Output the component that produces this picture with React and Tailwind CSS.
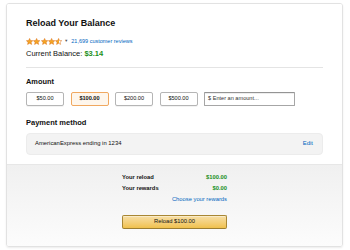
const Star = ({ fill }) => {
  const d = 'M5 0.6 L6.3 3.4 L9.4 3.7 L7.05 5.8 L7.75 8.8 L5 7.25 L2.25 8.8 L2.95 5.8 L0.6 3.7 L3.7 3.4 Z';
  return (
    <svg width="7.2" height="7" viewBox="0 0 10 9.6" className="block">
      <defs>
        <linearGradient id="half" x1="0" x2="1" y1="0" y2="0">
          <stop offset="50%" stopColor="#f5a623" />
          <stop offset="50%" stopColor="#ffffff" />
        </linearGradient>
      </defs>
      <path
        d={d}
        fill={fill === 'full' ? '#f5a623' : 'url(#half)'}
        stroke="#de7921"
        strokeWidth="0.8"
        strokeLinejoin="round"
      />
    </svg>
  );
};

const amounts = ['$50.00', '$100.00', '$200.00', '$500.00'];

export default function App() {
  return (
    <div
      className="w-[350px] h-[250px] bg-white pt-[3px] pl-[6px] text-[#111]"
      style={{ fontFamily: '"Liberation Sans", Arial, sans-serif' }}
    >
      <div className="w-[337px] h-[244px] border border-[#e2e2e2] rounded-[3px] shadow-[0_1px_2px_rgba(0,0,0,0.08)] flex flex-col overflow-hidden">
        {/* Top section */}
        <div className="px-[19px] pt-[14px] pb-[9px] bg-white">
          <h1 className="text-[9px] leading-[11px] font-bold">Reload Your Balance</h1>

          <div className="mt-[8px] h-[8px] flex items-center">
            <div className="flex gap-[0.1px]">
              <Star fill="full" />
              <Star fill="full" />
              <Star fill="full" />
              <Star fill="full" />
              <Star fill="half" />
            </div>
            <span className="ml-[2px] text-[4px] text-[#555]">▼</span>
            <span className="ml-[3px] text-[5.5px] leading-[8px] text-[#0066c0]">21,699 customer reviews</span>
          </div>

          <p className="mt-[3.5px] text-[7.5px] leading-[10px]">
            Current Balance: <span className="font-bold text-[#1a8f1a]">$3.14</span>
          </p>

          <div className="mt-[8px] border-b border-[#e4e4e4]" />

          <h2 className="mt-[9px] text-[7.4px] leading-[10px] font-bold">Amount</h2>

          <div className="mt-[5px] flex gap-[6.5px]">
            {amounts.map((a) => {
              const selected = a === '$100.00';
              return (
                <div
                  key={a}
                  className={
                    selected
                      ? 'w-[38px] h-[14px] flex items-center justify-center rounded-[2px] border border-[#f0a860] bg-[#fef6ec] text-[5.6px] font-bold'
                      : 'w-[38px] h-[14px] flex items-center justify-center rounded-[2px] border border-[#b5b5b5] bg-white text-[5.6px] shadow-[0_1px_0_rgba(0,0,0,0.05)]'
                  }
                >
                  {a}
                </div>
              );
            })}
            <div className="w-[91px] h-[14px] flex items-center pl-[3px] rounded-[1px] border border-[#a6a6a6] border-t-[#949494] bg-white text-[5.6px] text-[#333] shadow-[inset_0_1px_0_rgba(0,0,0,0.07)]">
              $ Enter an amount...
            </div>
          </div>

          <h2 className="mt-[12px] text-[7.5px] leading-[10px] font-bold">Payment method</h2>

          <div className="mt-[5px] h-[22px] flex items-center justify-between pl-[8px] pr-[9px] rounded-[4px] bg-[#f3f3f3] border border-[#ececec]">
            <span className="text-[5.9px]">AmericanExpress ending in 1234</span>
            <span className="text-[5.9px] text-[#0066c0]">Edit</span>
          </div>
        </div>

        {/* Bottom summary */}
        <div className="flex-1 border-t border-[#e7e7e7] bg-gradient-to-b from-[#f0f0f0] to-[#fcfcfc] flex justify-center pt-[7px]">
          <div className="w-[105px] flex flex-col">
            <div className="flex justify-between text-[5.8px] leading-[11px]">
              <span className="font-bold">Your reload</span>
              <span className="font-bold text-[#1a8f1a]">$100.00</span>
            </div>
            <div className="flex justify-between text-[5.8px] leading-[11px]">
              <span className="font-bold">Your rewards</span>
              <span className="font-bold text-[#1a8f1a]">$0.00</span>
            </div>
            <div className="text-right text-[5.8px] leading-[11px] text-[#0066c0]">Choose your rewards</div>
            <div className="mt-[10px] h-[14px] flex items-center justify-center rounded-[2px] border border-[#a88734] border-b-[#9c7e31] bg-gradient-to-b from-[#f7dfa5] to-[#f0c14b] text-[5.8px] shadow-[inset_0_1px_0_rgba(255,255,255,0.4)]">
              Reload $100.00
            </div>
          </div>
        </div>
      </div>
    </div>
  );
}
